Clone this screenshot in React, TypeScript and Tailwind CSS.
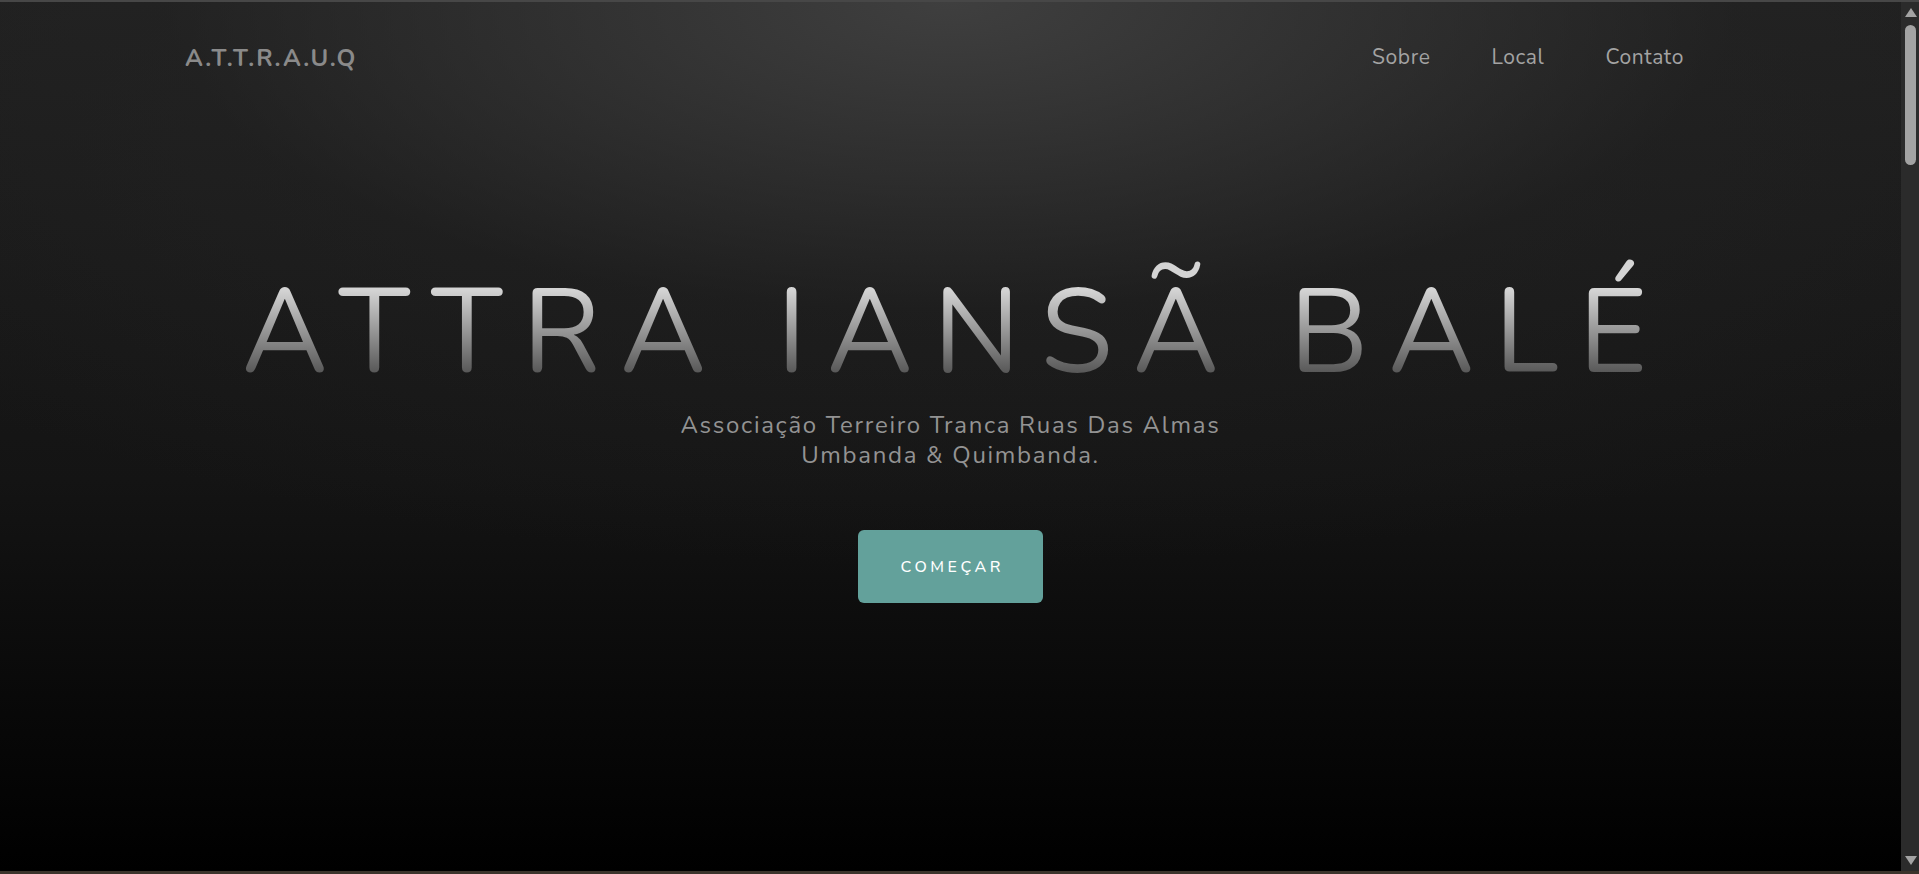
const navLinks = ["Sobre", "Local", "Contato"];

const sections = [
  {
    id: "sobre",
    title: "Sobre",
    text: "A Associação Terreiro Tranca Ruas Das Almas é uma casa de Umbanda & Quimbanda dedicada à caridade, ao acolhimento e ao estudo espiritual.",
  },
  {
    id: "local",
    title: "Local",
    text: "Venha nos visitar. Nossas giras acontecem semanalmente e são abertas a todos que buscam orientação e paz.",
  },
  {
    id: "contato",
    title: "Contato",
    text: "Entre em contato para saber mais sobre nossas atividades, horários e atendimentos.",
  },
];

function ScrollRail() {
  return (
    <aside className="flex w-[18px] shrink-0 flex-col items-center bg-[#2b2b2b] pl-[1px]">
      <svg className="mt-[6px] h-[9px] w-[12px]" viewBox="0 0 12 9">
        <path d="M6 0 L12 9 L0 9 Z" fill="#a3a3a3" />
      </svg>
      <div className="mt-[8px] h-[140px] w-[11px] rounded-full bg-[#a3a3a3]" />
      <div className="flex-1" />
      <svg className="mb-[6px] h-[9px] w-[12px]" viewBox="0 0 12 9">
        <path d="M0 0 L12 0 L6 9 Z" fill="#a3a3a3" />
      </svg>
    </aside>
  );
}

export default function App() {
  return (
    <div className="flex h-screen flex-col border-t-2 border-b-[3px] border-t-[#474747] border-b-[#3b342c] bg-black font-['Nunito','Lato',sans-serif]">
      <div className="flex min-h-0 flex-1">
        <main className="min-w-0 flex-1 overflow-y-auto [scrollbar-width:none]">
          {/* Hero */}
          <header className="h-full bg-[radial-gradient(ellipse_75%_65%_at_50%_0%,#3f3f3f_0%,rgba(40,40,40,0.35)_55%,transparent_100%),linear-gradient(to_bottom,#1f1f1f,#141414_55%,#000000)]">
            <nav className="flex h-[112px] items-center justify-between pl-[185px] pr-[217px]">
              <a href="#" className="text-[24px] font-bold tracking-[1.9px] text-[#8a8a8a]">
                A.T.T.R.A.U.Q
              </a>
              <ul className="flex items-center gap-[61px]">
                {navLinks.map((link) => (
                  <li key={link}>
                    <a
                      href={`#${link.toLowerCase()}`}
                      className="text-[21px] tracking-[0.6px] text-[#a3a3a3] transition-colors hover:text-white"
                    >
                      {link}
                    </a>
                  </li>
                ))}
              </ul>
            </nav>

            <div className="flex flex-col items-center">
              {/* top padding keeps the tilde inside the clipped gradient */}
              <h1 className="mt-[131px] bg-[linear-gradient(to_bottom,#d4d4d4_45px,#575757_128px)] bg-clip-text pl-[8px] pt-[30px] text-[118px] font-normal leading-none tracking-[0.17em] text-transparent">
                ATTRA IANSÃ BALÉ
              </h1>
              <p className="mt-[17px] text-center text-[24px] leading-[30px] tracking-[1.7px] text-[#939393]">
                Associação Terreiro Tranca Ruas Das Almas
                <br />
                Umbanda &amp; Quimbanda.
              </p>
              <a
                href="#sobre"
                className="mt-[60px] flex h-[73px] w-[185px] items-center justify-center rounded-md bg-[#63a19b] pl-[0.22em] text-[16px] font-medium tracking-[0.22em] text-white"
              >
                COMEÇAR
              </a>
            </div>
          </header>

          {/* Other sections */}
          {sections.map((section) => (
            <section
              key={section.id}
              id={section.id}
              className="flex h-[1420px] flex-col items-center border-t-2 border-[#3b332a] bg-[#0b0b0b] px-8 pt-32"
            >
              <h2 className="text-4xl font-light tracking-[0.2em] text-[#bdbdbd]">
                {section.title}
              </h2>
              <p className="mt-6 max-w-2xl text-center text-lg text-[#8c8c8c]">
                {section.text}
              </p>
            </section>
          ))}
        </main>
        <ScrollRail />
      </div>
    </div>
  );
}
